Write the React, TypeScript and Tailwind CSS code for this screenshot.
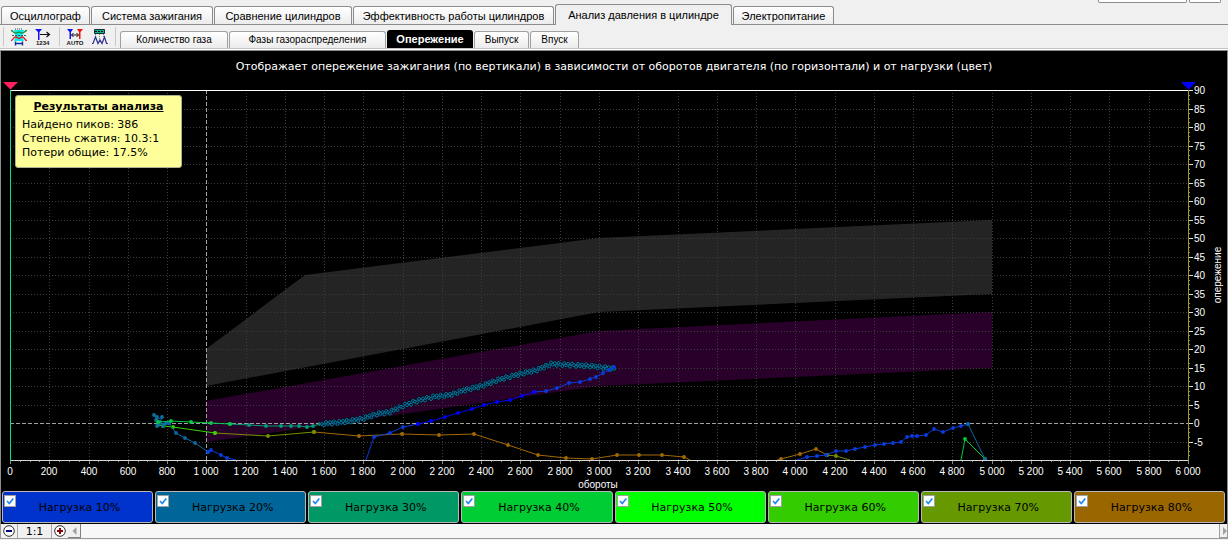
import React, { useState } from "react";

type Point = [number, number];

const mainTabs = [
  { label: "Осциллограф", width: "w-[89px]" },
  { label: "Система зажигания", width: "w-[122px]" },
  { label: "Сравнение цилиндров", width: "w-[138px]" },
  { label: "Эффективность работы цилиндров", width: "w-[201px]" },
  { label: "Анализ давления в цилиндре", width: "w-[177px]" },
  { label: "Электропитание", width: "w-[101px]" },
];

const subTabs = [
  { label: "Количество газа", width: "w-[108px]" },
  { label: "Фазы газораспределения", width: "w-[157px]" },
  { label: "Опережение", width: "w-[86px]" },
  { label: "Выпуск", width: "w-[55px]" },
  { label: "Впуск", width: "w-[49px]" },
];

const loads = [
  { percent: 10, color: "bg-[#0033cc]" },
  { percent: 20, color: "bg-[#006699]" },
  { percent: 30, color: "bg-[#009966]" },
  { percent: 40, color: "bg-[#00cc33]" },
  { percent: 50, color: "bg-[#00ff00]" },
  { percent: 60, color: "bg-[#33cc00]" },
  { percent: 70, color: "bg-[#669900]" },
  { percent: 80, color: "bg-[#996600]" },
];

const LEFT = 10;
const RIGHT = 1188;
const TOP = 90;
const BOTTOM = 460;

const px = (rpm: number) => Math.round(LEFT + (rpm * (RIGHT - LEFT)) / 6000);
const py = (angle: number) => Math.round(TOP + ((90 - angle) * (BOTTOM - TOP)) / 100);

const area = (values: Point[]) => values.map(([r, a]) => `${px(r)},${py(a)}`).join(" ");

const upperBand: Point[] = [[1000, 20], [1500, 40], [3000, 50], [5000, 55], [5000, 35], [3000, 30], [1000, 10]];
const lowerBand: Point[] = [[1000, 6], [3000, 25], [5000, 30], [5000, 15], [3000, 10], [1000, -5]];

const idleCluster: Point[] = [[154, 415], [157, 417], [156, 420], [162, 417], [160, 422], [157, 426], [159, 424], [166, 423], [163, 426], [169, 423]];

const blueDrop: Point[] = [[169, 423], [176, 433], [185, 438], [195, 443], [208, 452]];
const blueDropEnd: Point[] = [[208, 452], [211, 450], [221, 455], [227, 458], [236, 460]];

const idleGreen: Point[] = [[158, 422], [171, 421], [191, 422], [211, 423], [230, 424]];
const idleTeal: Point[] = [[230, 424], [249, 425], [266, 426], [281, 426], [291, 426], [299, 426], [307, 427], [313, 426], [320, 424], [332, 423]];

const limeLine: Point[] = [[158, 425], [163, 426], [173, 427], [215, 433]];
const oliveLine: Point[] = [[215, 433], [268, 436], [314, 432]];
const brownLine: Point[] = [
  [314, 432], [359, 436], [402, 434], [439, 435], [474, 434], [508, 445], [538, 455], [566, 458],
  [592, 459], [617, 455], [639, 455], [662, 455], [684, 457], [690, 460],
];

const climbStart: Point[] = [[366, 460], [374, 437], [390, 433], [403, 427], [418, 424]];
const climbMiddle: Point[] = [
  [418, 424], [431, 421], [445, 417], [458, 413], [472, 409], [484, 405], [497, 402], [510, 400], [522, 396], [534, 392],
];
const climbEnd: Point[] = [
  [534, 392], [546, 391], [557, 388], [569, 383], [580, 382], [590, 379], [596, 377], [603, 373], [609, 370], [614, 367],
];

const densePath: Point[] = [
  [322, 424], [332, 423], [343, 422], [362, 419], [377, 414], [390, 412], [403, 406], [417, 401], [433, 397], [450, 395],
  [465, 390], [482, 386], [498, 380], [520, 374], [537, 370], [551, 364], [570, 365], [590, 366], [607, 368], [616, 369],
];

const rightBlue: Point[] = [
  [797, 460], [807, 457], [817, 456], [826, 455], [836, 451], [846, 451], [855, 449], [865, 447], [875, 445], [884, 444],
  [893, 443], [901, 442], [907, 437], [912, 436], [917, 436], [926, 435], [934, 429], [943, 432], [953, 428], [961, 426],
  [968, 424],
];
const rightTeal: Point[] = [[968, 424], [985, 459]];
const rightGreen: Point[] = [[961, 460], [965, 439], [985, 459]];
const rightBrown: Point[] = [[777, 460], [781, 459], [800, 454], [816, 449], [827, 455]];
const rightOlive: Point[] = [[827, 455], [836, 456], [850, 460]];

const series: { points: Point[]; color: string }[] = [
  { points: brownLine, color: "#a36a00" },
  { points: oliveLine, color: "#789000" },
  { points: limeLine, color: "#36d400" },
  { points: idleCluster, color: "#0a71a0" },
  { points: blueDrop, color: "#0a68a2" },
  { points: blueDropEnd, color: "#0a3bdc" },
  { points: idleTeal, color: "#009c74" },
  { points: idleGreen, color: "#00cc48" },
  { points: rightBrown, color: "#a36a00" },
  { points: rightOlive, color: "#789000" },
  { points: rightBlue, color: "#0a3bdc" },
  { points: rightGreen, color: "#00cc33" },
  { points: rightTeal, color: "#0a68a2" },
];

const climbs: { points: Point[]; color: string }[] = [
  { points: climbStart, color: "#0a3bdc" },
  { points: climbEnd, color: "#0a3bdc" },
  { points: climbMiddle, color: "#0000fa" },
];

function spread(path: Point[], step: number): Point[] {
  const out: Point[] = [];
  let n = 0;
  for (let i = 0; i < path.length - 1; i++) {
    const [x1, y1] = path[i];
    const [x2, y2] = path[i + 1];
    const count = Math.max(1, Math.round(Math.hypot(x2 - x1, y2 - y1) / step));
    for (let k = 0; k < count; k++) {
      const wobble = [0, 1.5, -1.5, 0.5, -1, 1.5, -1.5][n % 7];
      out.push([x1 + ((x2 - x1) * k) / count, y1 + ((y2 - y1) * k) / count + wobble]);
      n++;
    }
  }
  return out;
}

const dense = spread(densePath, 2);

function Trace({ points, color }: { points: Point[]; color: string }) {
  return (
    <g>
      <polyline points={points.map((p) => p.join(",")).join(" ")} fill="none" stroke={color} strokeWidth="1" />
      {points
        .filter(([, y]) => y < 460)
        .map(([x, y], i) => (
          <circle key={i} cx={x} cy={y} r="1.9" fill={color} />
        ))}
    </g>
  );
}

function formatRpm(value: number) {
  return value < 1000 ? String(value) : `${Math.floor(value / 1000)} ${String(value % 1000).padStart(3, "0")}`;
}

function Chart() {
  const rpmTicks = Array.from({ length: 31 }, (_, i) => i * 200);
  const rpmMinor = Array.from({ length: 121 }, (_, i) => i * 50);
  const angleTicks = Array.from({ length: 20 }, (_, i) => 90 - i * 5);
  const angleMinor = Array.from({ length: 80 }, (_, i) => 90 - i * 1.25);
  return (
    <svg
      viewBox="1 80 1226 411"
      className="block h-auto w-full font-['Liberation_Sans',sans-serif] text-[10px]"
      role="img"
      aria-label="Опережение зажигания"
    >
      <polygon points={area(upperBand)} fill="#242424" />
      <polygon points={area(lowerBand)} fill="#290029" />

      <g stroke="#3c3c3c" strokeDasharray="1 2" shapeRendering="crispEdges">
        {rpmTicks.slice(1, -1).map((r) => (
          <line key={r} x1={px(r) + 0.5} x2={px(r) + 0.5} y1={TOP} y2={BOTTOM} />
        ))}
        {angleTicks.slice(1).map((a) => (
          <line key={a} x1={LEFT} x2={RIGHT} y1={py(a) + 0.5} y2={py(a) + 0.5} />
        ))}
      </g>
      <g stroke="#a0a0a0" strokeDasharray="4 2" shapeRendering="crispEdges">
        <line x1={px(1000) + 0.5} x2={px(1000) + 0.5} y1={TOP} y2={BOTTOM} />
        <line x1={LEFT} x2={RIGHT} y1={py(0) + 0.5} y2={py(0) + 0.5} />
      </g>

      {series.map((s, i) => (
        <Trace key={i} {...s} />
      ))}
      {dense.map(([x, y], i) => (
        <circle key={i} cx={x} cy={y} r="2.4" fill="#000c14" />
      ))}
      {dense.map(([x, y], i) => (
        <circle key={i} cx={x} cy={y} r="1.5" fill="#00141f" stroke="#0a80b0" strokeWidth="0.9" />
      ))}
      {climbs.map((s, i) => (
        <Trace key={i} {...s} />
      ))}

      <g shapeRendering="crispEdges">
        <line x1={LEFT} x2={RIGHT} y1="90.5" y2="90.5" stroke="#ffffff" />
        <line x1={LEFT} x2={RIGHT + 1} y1="460.5" y2="460.5" stroke="#d8d8d8" />
        <line x1="10.5" x2="10.5" y1="90" y2="461" stroke="#00e0a0" />
        <line x1="1188.5" x2="1188.5" y1="90" y2="461" stroke="#a09a20" />
        <g stroke="#8a8a8a">
          {rpmMinor.map((r) => (
            <line key={r} x1={px(r) + 0.5} x2={px(r) + 0.5} y1="461" y2={r % 200 === 0 ? 464 : 462} />
          ))}
          {angleMinor.map((a) => (
            <line key={a} x1="1189" x2="1190" y1={py(a) + 0.5} y2={py(a) + 0.5} />
          ))}
        </g>
        <g stroke="#e0e0e0">
          {angleTicks.map((a) => (
            <line key={a} x1="1189" x2="1193" y1={py(a) + 0.5} y2={py(a) + 0.5} />
          ))}
        </g>
      </g>

      <polygon points="3,82 18,82 10.5,89.5" fill="#ff2060" />
      <polygon points="1181,82 1196,82 1188.5,89.5" fill="#0000ff" />

      <g fill="#ffffff">
        {rpmTicks.map((r) => (
          <text key={r} x={px(r)} y="475" textAnchor="middle">
            {formatRpm(r)}
          </text>
        ))}
        {angleTicks.map((a) => (
          <text key={a} x="1194" y={py(a) + 4}>
            {a}
          </text>
        ))}
        <text x="598" y="488" textAnchor="middle">
          обороты
        </text>
        <text x="1221" y="275" textAnchor="middle" transform="rotate(-90 1221 275)">
          опережение
        </text>
      </g>
    </svg>
  );
}

function SensorIcon() {
  return (
    <svg width="18" height="18" viewBox="0 0 18 18" aria-hidden="true">
      <path d="M4 2h10l-1 4-1 2 2 5H4l2-5-1-2z" fill="#00f0f0" />
      <path d="M1 2.500c2 0 2 2.500 4.500 2.500S8 4 9 4s1.500 1 3.500 1S15 2.500 17 2.500" fill="none" stroke="#209040" strokeWidth="1.400" />
      <path d="M5 1h8" stroke="#105050" strokeDasharray="1 1" />
      <path d="M2 7.500h14" stroke="#206060" strokeDasharray="2 1" />
      <path d="M1 12.500c2.500 0 2-3.500 4.500-3.500S8 10.500 9 10.500s1.500-1.500 3.500-1.500 2 3.500 4.500 3.500" fill="none" stroke="#e02020" strokeWidth="1.400" />
      <path d="M6 15.500h6M5.500 13.500v4M12.500 13.500v4" stroke="#1030a0" strokeWidth="1.400" />
    </svg>
  );
}

function CountIcon() {
  return (
    <svg width="18" height="18" viewBox="0 0 18 18" aria-hidden="true">
      <path d="M0 1h7L4.500 4v8H3V4z" fill="#1010f0" />
      <path d="M5 6.500h9M11.500 4l3 2.500-3 2.500" fill="none" stroke="#101010" strokeWidth="1.200" />
      <text x="1" y="17" fontSize="6" fontWeight="bold" fontFamily="Liberation Sans" fill="#101010">
        1234
      </text>
    </svg>
  );
}

function AutoIcon() {
  return (
    <svg width="18" height="18" viewBox="0 0 18 18" aria-hidden="true">
      <path d="M1 1h6L5 4v7H3.500V4z" fill="#1010f0" />
      <path d="M11 1h6l-2.500 3v7H13V4z" fill="#f01010" />
      <path d="M5.500 7h7M7.500 5l-2 2 2 2M10.500 5l2 2-2 2" fill="none" stroke="#101010" />
      <text x="9" y="17" textAnchor="middle" fontSize="6" fontWeight="bold" fontFamily="Liberation Sans" fill="#101010">
        AUTO
      </text>
    </svg>
  );
}

function WaveIcon() {
  return (
    <svg width="18" height="18" viewBox="0 0 18 18" aria-hidden="true">
      <path d="M3.500 1.500h10v4h-10z" fill="#20b090" stroke="#103030" />
      <path d="M4 3.500h9" stroke="#101010" strokeDasharray="2 1" />
      <path d="M4.500 6v3M8.500 6v6M12.500 6v3" stroke="#808080" strokeDasharray="1 1" />
      <path d="M1 15.500h1L4.500 9l2.500 6.500L9 12l2 3.500L13.500 9l2 6.500h1.500" fill="none" stroke="#303090" strokeWidth="1.200" />
    </svg>
  );
}

const tools = [
  { label: "Датчик", icon: <SensorIcon /> },
  { label: "Нумерация", icon: <CountIcon /> },
  { label: "Авто", icon: <AutoIcon /> },
  { label: "Форма сигнала", icon: <WaveIcon /> },
];

function ToolButton({ index }: { index: number }) {
  return (
    <button type="button" aria-label={tools[index].label} className="flex h-5 w-[25px] items-center justify-center">
      {tools[index].icon}
    </button>
  );
}

function ZoomButton({ label, plus }: { label: string; plus?: boolean }) {
  return (
    <button type="button" aria-label={label} className="flex h-3.5 w-4 items-center justify-center bg-[#f0f0f0]">
      <svg width="12" height="12" viewBox="0 0 12 12" aria-hidden="true">
        <circle cx="6" cy="6" r="5.300" fill="#ffffff" stroke="#303030" />
        {plus ? (
          <path d="M3 6h6M6 3v6" stroke="#8b0000" strokeWidth="2" />
        ) : (
          <path d="M3 6h6" stroke="#000080" strokeWidth="2" />
        )}
      </svg>
    </button>
  );
}

export default function App() {
  const [tab, setTab] = useState(4);
  const [subTab, setSubTab] = useState(2);
  const [enabled, setEnabled] = useState<boolean[]>(loads.map(() => true));

  return (
    <main className="min-h-screen bg-[#f0f0f0] font-['Liberation_Sans',sans-serif] text-black">
      <header className="flex h-[25px] items-start border-b border-[#8c8c8c] pl-px">
        <nav className="flex h-[25px] items-end gap-px pb-px">
          {mainTabs.map((t, i) => (
            <button
              key={t.label}
              type="button"
              onClick={() => setTab(i)}
              className={`${t.width} shrink-0 whitespace-nowrap rounded-t-[3px] border border-b-0 border-[#8c8c8c] text-center text-[11px] leading-4 ${
                i === tab ? "-mb-px h-[21px] bg-[#f0f0f0] pb-px" : "h-[18px] bg-gradient-to-b from-white to-[#ececec]"
              }`}
            >
              {t.label}
            </button>
          ))}
        </nav>
        <div className="ml-auto mr-[7px] flex gap-0.5">
          <div className="h-[3px] w-[89px] rounded-b-[2px] border border-t-0 border-[#8c8c8c] bg-white" />
          <div className="h-[3px] w-8 rounded-b-[2px] border border-t-0 border-[#8c8c8c] bg-white" />
        </div>
      </header>

      <div className="flex h-6 items-stretch border-b border-[#c4c4c4] pl-[3px]">
        <div className="my-0.5 flex items-center border-x border-[#c8c8c8] pl-0.5 pr-[3px]">
          <ToolButton index={0} />
          <ToolButton index={1} />
        </div>
        <div className="my-0.5 flex items-center border-r border-[#c8c8c8] pl-0.5 pr-[3px]">
          <ToolButton index={2} />
          <ToolButton index={3} />
        </div>
        <nav className="ml-1 flex items-end gap-px">
          {subTabs.map((t, i) => (
            <button
              key={t.label}
              type="button"
              onClick={() => setSubTab(i)}
              className={`${t.width} shrink-0 whitespace-nowrap rounded-t-[3px] text-center leading-4 ${
                i === subTab
                  ? "h-[18px] bg-black text-[11px] font-bold text-white"
                  : "h-[17px] border border-b-0 border-[#a0a0a0] bg-gradient-to-b from-white to-[#ececec] text-[10px]"
              }`}
            >
              {t.label}
            </button>
          ))}
        </nav>
      </div>

      <div className="border-b border-[#8c8c8c] bg-white pt-px" />

      <section className="relative border-x border-[#8c8c8c] bg-black pb-px">
        <h1 className="h-[29px] whitespace-nowrap text-center font-['DejaVu_Sans',sans-serif] text-[11px] leading-8 text-white">
          Отображает опережение зажигания (по вертикали) в зависимости от оборотов двигателя (по горизонтали) и от нагрузки (цвет)
        </h1>
        <Chart />
        <aside className="absolute left-3.5 top-11 h-[73px] w-[167px] whitespace-nowrap rounded-[3px] border border-[#b0b090] bg-[#ffff99] px-1.5 pt-1 font-['DejaVu_Sans',sans-serif] text-[11px] leading-[14px]">
          <h2 className="mb-1 text-center font-bold underline">Результаты анализа</h2>
          <p>Найдено пиков: 386</p>
          <p>Степень сжатия: 10.3:1</p>
          <p>Потери общие: 17.5%</p>
        </aside>

        <div className="grid grid-cols-8 gap-0.5 pl-px pr-0.5">
          {loads.map((load, i) => (
            <label
              key={load.percent}
              className={`${load.color} relative flex h-8 items-center justify-center rounded-[3px] border border-[#b8b8b8] pl-1 pt-0.5 font-['DejaVu_Sans',sans-serif] text-[11px]`}
            >
              <input
                type="checkbox"
                checked={enabled[i]}
                onChange={() => setEnabled(enabled.map((v, k) => (k === i ? !v : v)))}
                className="peer absolute left-px top-[3px] size-3 appearance-none border border-[#a0a0a0] bg-white"
              />
              <svg
                className="pointer-events-none absolute left-px top-[3px] hidden size-3 peer-checked:block"
                viewBox="0 0 12 12"
                aria-hidden="true"
              >
                <path d="M3 6l2.300 2.500L9.300 3.500" fill="none" stroke="#1e88f0" strokeWidth="1.700" />
              </svg>
              Нагрузка {load.percent}%
            </label>
          ))}
        </div>
      </section>

      <footer className="flex h-[15px] items-stretch border-x border-b border-[#9a9a9a] bg-[#f7f7f7]">
        <ZoomButton label="Уменьшить" />
        <button type="button" className="w-[35px] border-x border-[#a8a8a8] bg-[#f0f0f0] font-['DejaVu_Sans',sans-serif] text-[11px] leading-[15px]">
          1:1
        </button>
        <ZoomButton label="Увеличить" plus />
        <button type="button" aria-label="Влево" className="flex w-[13px] items-center justify-center border-b border-r border-[#808080] bg-[#f0f0f0]">
          <svg width="5" height="8" viewBox="0 0 5 8" aria-hidden="true">
            <path d="M4.500 0v8L0.500 4z" fill="#a0a0a0" />
          </svg>
        </button>
        <div className="flex-1" />
        <button type="button" aria-label="Вправо" className="flex w-2 items-center justify-end border-b border-l border-[#a0a0a0] bg-[#f0f0f0]">
          <svg width="4" height="8" viewBox="0 0 4 8" aria-hidden="true">
            <path d="M0 0v8l4-4z" fill="#a0a0a0" />
          </svg>
        </button>
      </footer>
    </main>
  );
}
